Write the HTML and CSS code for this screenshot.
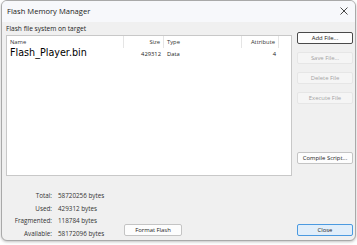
FILE: index.html
```html
<!DOCTYPE html>
<html>
<head>
<meta charset="utf-8">
<link rel="stylesheet" href="styles.css">
</head>
<body>
<div class="window">
  <div class="titlebar">
    <span class="title">Flash Memory Manager</span>
    <svg class="close-x" width="8" height="8" viewBox="0 0 8 8"><path d="M0.5 0.5 L7.5 7.5 M7.5 0.5 L0.5 7.5" stroke="#333" stroke-width="0.9" fill="none"/></svg>
  </div>
  <div class="main">
    <div class="left">
      <div class="caption">Flash file system on target</div>
      <div class="listbox">
        <div class="lv-header">
          <div class="col c-name">Name</div>
          <div class="col c-size">Size</div>
          <div class="col c-type">Type</div>
          <div class="col c-attr">Attribute</div>
        </div>
        <div class="lv-row">
          <div class="c-name fname">Flash_Player.bin</div>
          <div class="c-size cell">429312</div>
          <div class="c-type cell">Data</div>
          <div class="c-attr cell">4</div>
        </div>
      </div>
    </div>
    <div class="right">
      <div class="btn focus">Add File...</div>
      <div class="btn disabled">Save File...</div>
      <div class="btn disabled">Delete File</div>
      <div class="btn disabled">Execute File</div>
      <div class="spacer"></div>
      <div class="btn">Compile Script...</div>
    </div>
  </div>
  <div class="footer">
    <div class="stats">
      <div class="lbl">Total:</div><div class="val">58720256 bytes</div>
      <div class="lbl">Used:</div><div class="val">429312 bytes</div>
      <div class="lbl">Fragmented:</div><div class="val">118784 bytes</div>
      <div class="lbl">Available:</div><div class="val">58172096 bytes</div>
    </div>
    <div class="btn format">Format Flash</div>
    <div class="btn primary close">Close</div>
  </div>
</div>
</body>
</html>
```
FILE: styles.css
```css
* { box-sizing: border-box; }
html, body { margin: 0; padding: 0; }
body {
  width: 357px;
  height: 245px;
  background: #ffffff;
  font-family: "Open Sans", "Noto Sans", sans-serif;
  color: #1a1a1a;
  overflow: hidden;
}
.window {
  margin-left: 1px;
  width: 355px;
  height: 241px;
  background: #f0f0f0;
  border: 1px solid #a9a9a9;
  border-radius: 6px;
  overflow: hidden;
  box-shadow: 0 1px 3px rgba(0,0,0,0.25);
  display: flex;
  flex-direction: column;
}
.titlebar {
  height: 21px;
  background: #f7f8fb;
  display: flex;
  align-items: center;
  justify-content: space-between;
  padding: 0 7px 1px 5px;
}
.title { font-size: 7.6px; color: #222; }
.close-x { display: block; }
.main {
  display: flex;
  padding-left: 4px;
}
.left { width: 286px; }
.caption {
  font-size: 6.6px;
  line-height: 8px;
  margin-top: 3px;
  color: #222;
}
.listbox {
  margin-top: 2px;
  height: 141px;
  background: #fff;
  border: 1px solid #c8c8c8;
}
.lv-header {
  display: flex;
  height: 12px;
  align-items: stretch;
  font-size: 5.8px;
  color: #333;
}
.lv-header .col {
  border-right: 1px solid #e5e5e5;
  line-height: 12px;
  padding: 0 3px;
}
.c-name { width: 117px; }
.c-size { width: 40px; text-align: right; }
.c-type { width: 78px; }
.c-attr { width: 37px; text-align: right; }
.lv-row {
  display: flex;
  align-items: center;
  height: 10px;
}
.fname {
  font-family: "DejaVu Sans", sans-serif;
  font-size: 9.6px;
  color: #000;
  padding-left: 3px;
  line-height: 10px;
}
.cell {
  font-size: 5.8px;
  color: #222;
  padding: 1px 3px 0;
}
.right {
  margin-left: 5px;
  width: 56px;
  padding-top: 10px;
  display: flex;
  flex-direction: column;
  gap: 8px;
  height: 142px;
}
.spacer { flex: 1; }
.btn {
  height: 12px;
  flex: none;
  border: 1px solid #c4c4c4;
  border-radius: 2px;
  background: #fdfdfd;
  font-size: 5.9px;
  line-height: 10px;
  text-align: center;
  color: #1a1a1a;
}
.btn.focus { border-color: #4a4a4a; }
.btn.disabled {
  background: #f5f5f5;
  border-color: #e6e6e6;
  color: #a3a3a3;
}
.footer {
  flex: 1;
  display: flex;
  align-items: flex-end;
  padding: 0 0 4px 4px;
}
.stats {
  display: grid;
  grid-template-columns: 46px auto;
  column-gap: 6px;
  row-gap: 0;
  font-size: 6.3px;
  line-height: 12.5px;
  color: #333;
  width: 115px;
  margin-bottom: -4px;
}
.stats .lbl { text-align: right; }
.format {
  width: 58px;
  margin-left: 3px;
}
.close {
  width: 56px;
  margin-left: auto;
  margin-right: 2px;
}
.btn.primary {
  background: #e1eefa;
  border-color: #4b9ae0;
}
```
